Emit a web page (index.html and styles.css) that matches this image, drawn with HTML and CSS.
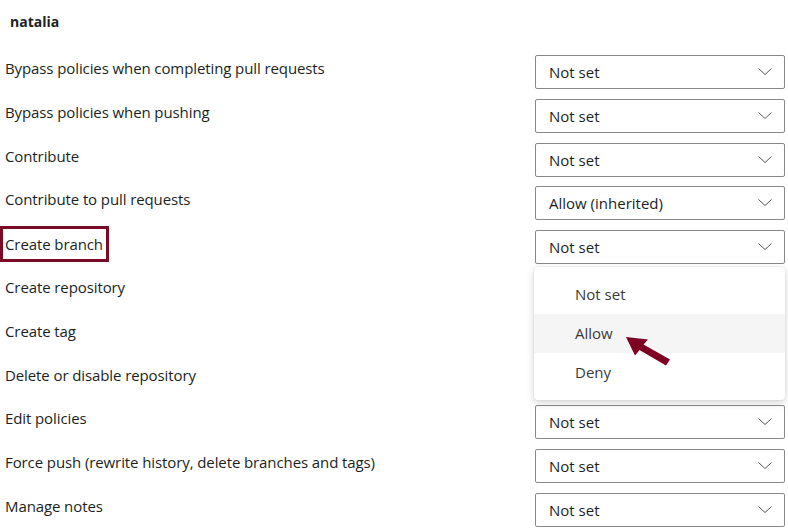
FILE: index.html
```html
<!DOCTYPE html>
<html>
<head>
<meta charset="utf-8">
<link rel="stylesheet" href="styles.css">
</head>
<body>
<div class="page">
  <div class="user">natalia</div>
  <div class="list">
    <div class="row"><span class="label">Bypass policies when completing pull requests</span><div class="select"><span>Not set</span><svg class="chev" viewBox="0 0 14 7"><path d="M0.5 0.5 L7 6.5 L13.5 0.5"/></svg></div></div>
    <div class="row"><span class="label">Bypass policies when pushing</span><div class="select"><span>Not set</span><svg class="chev" viewBox="0 0 14 7"><path d="M0.5 0.5 L7 6.5 L13.5 0.5"/></svg></div></div>
    <div class="row"><span class="label">Contribute</span><div class="select"><span>Not set</span><svg class="chev" viewBox="0 0 14 7"><path d="M0.5 0.5 L7 6.5 L13.5 0.5"/></svg></div></div>
    <div class="row"><span class="label">Contribute to pull requests</span><div class="select"><span>Allow (inherited)</span><svg class="chev" viewBox="0 0 14 7"><path d="M0.5 0.5 L7 6.5 L13.5 0.5"/></svg></div></div>
    <div class="row"><span class="label highlight">Create branch</span><div class="select"><span>Not set</span><svg class="chev" viewBox="0 0 14 7"><path d="M0.5 0.5 L7 6.5 L13.5 0.5"/></svg></div></div>
    <div class="row"><span class="label">Create repository</span><div class="select"><span>Not set</span><svg class="chev" viewBox="0 0 14 7"><path d="M0.5 0.5 L7 6.5 L13.5 0.5"/></svg></div></div>
    <div class="row"><span class="label">Create tag</span><div class="select"><span>Not set</span><svg class="chev" viewBox="0 0 14 7"><path d="M0.5 0.5 L7 6.5 L13.5 0.5"/></svg></div></div>
    <div class="row"><span class="label">Delete or disable repository</span><div class="select"><span>Not set</span><svg class="chev" viewBox="0 0 14 7"><path d="M0.5 0.5 L7 6.5 L13.5 0.5"/></svg></div></div>
    <div class="row"><span class="label">Edit policies</span><div class="select"><span>Not set</span><svg class="chev" viewBox="0 0 14 7"><path d="M0.5 0.5 L7 6.5 L13.5 0.5"/></svg></div></div>
    <div class="row"><span class="label">Force push (rewrite history, delete branches and tags)</span><div class="select"><span>Not set</span><svg class="chev" viewBox="0 0 14 7"><path d="M0.5 0.5 L7 6.5 L13.5 0.5"/></svg></div></div>
    <div class="row"><span class="label">Manage notes</span><div class="select"><span>Not set</span><svg class="chev" viewBox="0 0 14 7"><path d="M0.5 0.5 L7 6.5 L13.5 0.5"/></svg></div></div>
  </div>

  <div class="menu">
    <div class="item">Not set</div>
    <div class="item hover">Allow</div>
    <div class="item">Deny</div>
  </div>

  <svg class="arrow" width="50" height="30" viewBox="0 0 50 30">
    <polygon points="0,0 22,2.5 17.5,7.5 44,22.5 40,28.5 13.5,13 9,18.5"/>
  </svg>
</div>
</body>
</html>
```

FILE: styles.css
```css
html, body {
  margin: 0;
  padding: 0;
  background: #ffffff;
}

.page {
  position: relative;
  width: 788px;
  height: 531px;
  overflow: hidden;
  font-family: "Open Sans", "Liberation Sans", sans-serif;
  color: #201f1e;
}

.user {
  font-size: 14px;
  font-weight: 700;
  padding: 12px 0 0 10px;
  height: 55px;
  box-sizing: border-box;
  line-height: 20px;
}

.list {
  display: flex;
  flex-direction: column;
}

.row {
  display: flex;
  justify-content: space-between;
  align-items: flex-start;
  height: 43.8px;
}

.label {
  font-size: 15px;
  line-height: 20px;
  padding: 3px 0 0 5px;
  letter-spacing: -0.1px;
}

.label.highlight {
  border: 3px solid #7b0a26;
  padding: 5px 3px 5px 2px;
  margin-top: -4px;
  line-height: 20px;
}

.select {
  width: 250px;
  height: 34px;
  box-sizing: border-box;
  border: 1px solid #8a8886;
  border-radius: 2px;
  margin-right: 3px;
  display: flex;
  align-items: center;
  justify-content: space-between;
  padding: 0 12px 0 13px;
  font-size: 15px;
  color: #201f1e;
}

.chev {
  width: 14px;
  height: 7px;
  fill: none;
  stroke: #555;
  stroke-width: 1;
  margin-top: -1px;
}

.menu {
  position: absolute;
  left: 534px;
  top: 267px;
  width: 251px;
  padding: 8px 0;
  background: #ffffff;
  border-radius: 4px;
  box-shadow: 0 3px 8px rgba(0, 0, 0, 0.16), 0 0 2px rgba(0, 0, 0, 0.12);
}

.item {
  height: 39px;
  line-height: 39px;
  padding-left: 41px;
  font-size: 15px;
  color: #3b3a39;
}

.item.hover {
  background: #f5f5f5;
}

.arrow {
  position: absolute;
  left: 626px;
  top: 337px;
  fill: #7d0022;
}
```
